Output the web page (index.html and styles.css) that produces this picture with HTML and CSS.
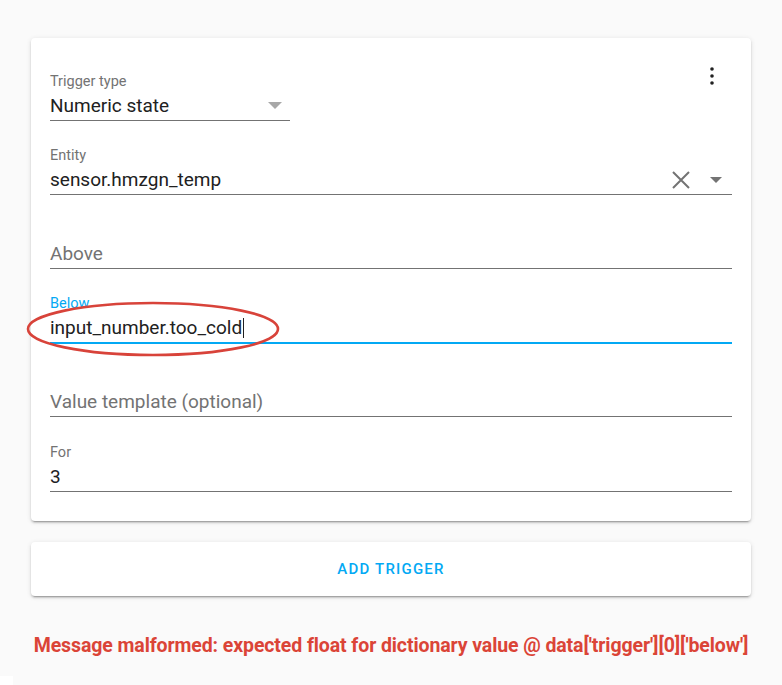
FILE: index.html
```html
<!DOCTYPE html>
<html>
<head>
<meta charset="utf-8">
<link rel="stylesheet" href="styles.css">
</head>
<body>
<div class="page">
  <div class="card trigger-card">
    <button class="menu" aria-label="menu">
      <svg width="24" height="24" viewBox="0 0 24 24"><circle cx="12" cy="5" r="1.8" fill="#212121"/><circle cx="12" cy="12" r="1.8" fill="#212121"/><circle cx="12" cy="19" r="1.8" fill="#212121"/></svg>
    </button>
    <div class="field select">
      <div class="label">Trigger type</div>
      <div class="input">
        <span class="value">Numeric state</span>
        <svg class="caret light" width="14" height="8" viewBox="0 0 14 8"><path d="M0 0h14L7 7z" fill="#a8a8a8"/></svg>
      </div>
      <div class="line"></div>
    </div>
    <div class="field">
      <div class="label">Entity</div>
      <div class="input">
        <span class="value">sensor.hmzgn_temp</span>
        <svg class="clear" width="20" height="20" viewBox="0 0 20 20"><path d="M2 2L18 18M18 2L2 18" stroke="#737373" stroke-width="2"/></svg>
        <svg class="caret" width="12" height="6" viewBox="0 0 12 6"><path d="M0 0h12L6 6z" fill="#737373"/></svg>
      </div>
      <div class="line"></div>
    </div>
    <div class="field">
      <div class="label"></div>
      <div class="input"><span class="placeholder">Above</span></div>
      <div class="line"></div>
    </div>
    <div class="field focused">
      <div class="label">Below</div>
      <div class="input"><span class="value">input_number.too_cold</span><span class="cursor"></span></div>
      <div class="line"></div>
      <svg class="annotation" width="256" height="58" viewBox="0 0 256 58"><ellipse cx="128" cy="29" rx="125" ry="26" fill="none" stroke="#d8433a" stroke-width="2.6"/></svg>
    </div>
    <div class="field">
      <div class="label"></div>
      <div class="input"><span class="placeholder">Value template (optional)</span></div>
      <div class="line"></div>
    </div>
    <div class="field last">
      <div class="label">For</div>
      <div class="input"><span class="value">3</span></div>
      <div class="line"></div>
    </div>
  </div>
  <div class="card add-card">
    <span class="add-btn">ADD TRIGGER</span>
  </div>
  <div class="error">Message malformed: expected float for dictionary value @ data['trigger'][0]['below']</div>
</div>
<div class="corner"></div>
</body>
</html>
```
FILE: styles.css
```css
html, body {
  margin: 0;
  padding: 0;
  background: #fafafa;
  font-family: Roboto, "Liberation Sans", sans-serif;
  color: #212121;
}
.page {
  padding: 38px 31px 0 31px;
}
.card {
  background: #fff;
  border-radius: 4px;
  box-shadow: 0 2px 2px 0 rgba(0,0,0,0.14), 0 1px 5px 0 rgba(0,0,0,0.12), 0 3px 1px -2px rgba(0,0,0,0.2);
}
.trigger-card {
  position: relative;
  padding: 17px 19px 21px 19px;
}
.menu {
  position: absolute;
  top: 26px;
  right: 27px;
  width: 24px;
  height: 24px;
  padding: 0;
  border: 0;
  background: none;
  display: flex;
}
.field {
  position: relative;
  padding: 17px 0 8px 0;
}
.field.last { padding-top: 18px; }
.field.select { width: 240px; }
.label {
  height: 16px;
  line-height: 20px;
  font-size: 14.5px;
  color: #737373;
  margin-bottom: 5px;
  padding-top: 1px;
  margin-top: -1px;
}
.input {
  height: 24px;
  line-height: 24px;
  font-size: 19px;
  display: flex;
  align-items: center;
  margin-bottom: 2px;
  padding-top: 2px;
  margin-top: -1px;
}
.value { color: #212121; }
.placeholder { color: #737373; }
.caret { margin-left: auto; margin-right: 8px; }
.clear { margin-left: auto; margin-right: 0; }
.clear + .caret { margin-left: 19px; margin-right: 10px; }
.line {
  height: 1px;
  background: #737373;
}
.focused .label { color: #03a9f4; }
.focused .line { height: 2px; background: #03a9f4; margin-bottom: -1px; }
.cursor {
  display: inline-block;
  width: 1px;
  height: 20px;
  background: #212121;
  margin-left: 1px;
}
.annotation {
  position: absolute;
  left: -25px;
  top: 23px;
}
.add-card {
  margin-top: 21px;
  height: 54px;
  display: flex;
  align-items: center;
  justify-content: center;
}
.add-btn {
  color: #03a9f4;
  font-size: 15px;
  font-weight: 500;
  letter-spacing: 1.2px;
}
.error {
  margin-top: 38px;
  text-align: center;
  color: #db4437;
  font-size: 19.5px;
  font-weight: bold;
  letter-spacing: -0.1px;
}
.corner {
  position: absolute;
  left: 0;
  top: 676px;
  width: 13px;
  height: 9px;
  background: #fff;
}
```
